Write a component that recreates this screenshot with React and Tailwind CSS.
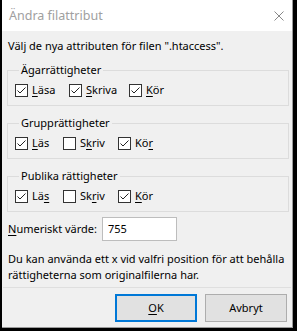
import React from "react";

const Check = ({ checked }) => (
  <span className="w-[13px] h-[13px] border border-[#333333] bg-white flex items-center justify-center shrink-0">
    {checked && (
      <svg width="11" height="11" viewBox="0 0 11 11">
        <path d="M1.5 5.5 L4 8 L9.5 2.5" fill="none" stroke="#222" strokeWidth="1" />
      </svg>
    )}
  </span>
);

const Item = ({ checked, label, u, w }) => {
  const before = label.slice(0, u);
  const ch = label[u];
  const after = label.slice(u + 1);
  return (
    <div className={`flex items-center ${w}`}>
      <Check checked={checked} />
      <span className="ml-[4px] leading-[16px]">
        {before}
        <span className="underline underline-offset-2">{ch}</span>
        {after}
      </span>
    </div>
  );
};

const Group = ({ title, items, widths }) => (
  <fieldset className="border border-[#dcdcdc] mx-[5px] mr-[3px] pl-[7px] pb-[7px] pt-[4px]">
    <legend className="ml-[4px] px-[2px] leading-[16px]">{title}</legend>
    <div className="flex items-center h-[16px]">
      {items.map((it, i) => (
        <Item key={i} {...it} w={widths[i]} />
      ))}
    </div>
  </fieldset>
);

export default function App() {
  return (
    <div
      className="w-[297px] h-[331px] bg-black pl-[2px] pr-[4px] pb-[3px] text-[11px] text-black"
      style={{ fontFamily: '"Noto Sans", sans-serif' }}
    >
      <div className="w-full h-full flex flex-col bg-[#f0f0f0] border-r border-b border-[#9a9a9a]">
        <div className="h-[31px] bg-white flex items-center justify-between pl-[7px] pr-[8px] shrink-0">
          <span className="text-[12.5px] text-[#a0a0a0] leading-[20px] pt-[1px]">Ändra filattribut</span>
          <svg width="10" height="10" viewBox="0 0 10 10">
            <path d="M0.5 0.5 L9.5 9.5 M9.5 0.5 L0.5 9.5" stroke="#888" strokeWidth="1" />
          </svg>
        </div>
        <div className="mt-[7px] ml-[6px] leading-[16px]">Välj de nya attributen för filen ".htaccess".</div>
        <div className="mt-[8px] flex flex-col gap-[9px]">
          <Group
            title="Ägarrättigheter"
            widths={["w-[54px]", "w-[60px]", "w-[60px]"]}
            items={[
              { checked: true, label: "Läsa", u: 0 },
              { checked: true, label: "Skriva", u: 0 },
              { checked: true, label: "Kör", u: 0 },
            ]}
          />
          <Group
            title="Grupprättigheter"
            widths={["w-[48px]", "w-[55px]", "w-[60px]"]}
            items={[
              { checked: true, label: "Läs", u: 0 },
              { checked: false, label: "Skriv", u: 1 },
              { checked: true, label: "Kör", u: 2 },
            ]}
          />
          <Group
            title="Publika rättigheter"
            widths={["w-[48px]", "w-[55px]", "w-[60px]"]}
            items={[
              { checked: true, label: "Läs", u: 2 },
              { checked: false, label: "Skriv", u: 2 },
              { checked: true, label: "Kör", u: 0 },
            ]}
          />
        </div>
        <div className="mt-[5px] ml-[6px] flex items-center">
          <span className="w-[94px] whitespace-nowrap">
            <span className="underline underline-offset-2">N</span>umeriskt värde:
          </span>
          <div className="w-[75px] h-[24px] bg-white border border-[#bdbdbd] flex items-center pl-[5px]">755</div>
        </div>
        <div className="mt-[10px] ml-[6px] leading-[16px] whitespace-nowrap">
          Du kan använda ett x vid valfri position för att behålla
          <br />
          rättigheterna som originalfilerna har.
        </div>
        <div className="mt-[4px] mx-[1px] h-px bg-[#dfdfdf]" />
        <div className="mt-[6px] flex justify-end gap-[8px] pr-[5px]">
          <button className="w-[82px] h-[28px] bg-[#e1e1e1] border border-[#0078d7] outline outline-1 outline-[#0078d7] -outline-offset-2">
            <span className="underline underline-offset-2">O</span>K
          </button>
          <button className="w-[82px] h-[28px] bg-[#e1e1e1] border border-[#adadad]">Avbryt</button>
        </div>
      </div>
    </div>
  );
}
